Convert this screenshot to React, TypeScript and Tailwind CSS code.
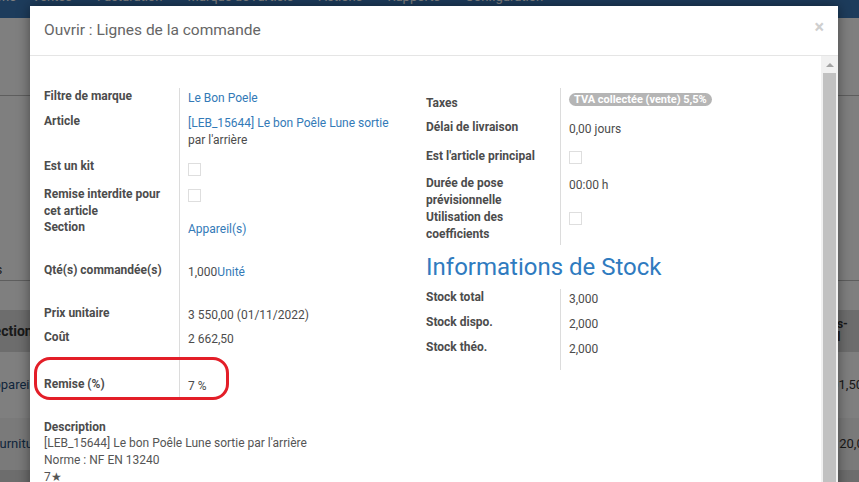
import React from 'react';

type RowProps = {
  label: React.ReactNode;
  h: string;
  labelW?: string;
  labelPt?: string;
  children?: React.ReactNode;
};

function FieldRow({ label, h, labelW = 'w-[135px]', labelPt = 'pt-0', children }: RowProps) {
  return (
    <div className={`relative flex ${h}`}>
      <div className={`${labelW} ${labelPt} shrink-0 pr-2 font-bold leading-[17px] text-[#4c4c4c]`}>{label}</div>
      <div className="flex-1 border-l border-[#dcdcdc] pl-2 pt-[2px] leading-[17px] text-[#4c4c4c]">{children}</div>
    </div>
  );
}

function Check({ mt }: { mt: string }) {
  return <div className={`${mt} h-[13px] w-[13px] border border-[#dedede] bg-white`} />;
}

function Link({ children }: { children: React.ReactNode }) {
  return <span className="text-[#337ab7]">{children}</span>;
}

export default function App() {
  return (
    <div className="relative h-[482px] w-[859px] overflow-hidden bg-white font-['Roboto',sans-serif] text-[12px]">
      {/* app page behind the dialog */}
      <nav className="flex h-[18px] gap-[25px] bg-[#3a78b8] text-[13px] text-white">
        {['Téléphone', 'Ventes', 'Facturation', "Marque de l'article", 'Actions', 'Rapports', 'Configuration'].map((m, i) => (
          <span key={m} className={`-translate-y-[12px] leading-[18px] ${i === 0 ? '-ml-[44px] -mr-[9px]' : ''}`}>
            {m}
          </span>
        ))}
      </nav>
      <div className="h-[78px] border-b border-[#bcbcbc]" />
      <div className="flex h-[185px] items-end border-b border-[#bcbcbc] pb-[1px]">
        <span className="-ml-[48px] leading-[17px] text-[#333]">Appareils</span>
      </div>
      <div className="h-[29px]" />
      <div className="-ml-[15px] w-[884px] text-[#333]">
        <div className="flex h-[42px] items-center justify-between bg-[#dadada] font-bold">
          <span className="text-[14px]">Section</span>
          <span className="mr-[13px] w-[40px] text-[12px] leading-[13px]">Sous-total</span>
        </div>
        <div className="flex h-[66px] items-center justify-between text-[13px]">
          <span className="text-[#1f4d7a]">Appareil(s)</span>
          <span className="mr-[6px]">3 301,50</span>
        </div>
        <div className="flex h-[52px] items-center justify-between bg-[#f4f4f4] text-[13px]">
          <span className="text-[#1f4d7a]">Fourniture</span>
          <span className="-mr-[2px]">120,00</span>
        </div>
        <div className="h-[40px] bg-[#dadada]" />
      </div>

      <div className="absolute inset-0 bg-black/50" />

      {/* dialog */}
      <div className="absolute left-[30px] top-[6px] flex h-[500px] w-[808px] flex-col bg-white shadow-[0_0_12px_rgba(0,0,0,0.45)]">
        <div className="flex h-[50px] shrink-0 items-center justify-between border-b border-[#e5e5e5] pl-[14px] pr-[14px]">
          <span className="pt-[1px] text-[15.5px] text-[#666]">Ouvrir : Lignes de la commande</span>
          <span className="-mt-[7px] text-[18px] font-bold leading-none text-[#cfcfcf]">×</span>
        </div>

        <div className="flex min-h-0 flex-1">
          <div className="flex-1 pl-[14px] pt-[32px]">
            <div className="flex">
              {/* left group */}
              <div className="w-[382px] shrink-0">
                <FieldRow label="Filtre de marque" h="h-[25px]">
                  <Link>Le Bon Poele</Link>
                </FieldRow>
                <FieldRow label="Article" h="h-[45px]">
                  <Link>[LEB_15644] Le bon Poêle Lune sortie</Link>
                  <br />
                  par l'arrière
                </FieldRow>
                <FieldRow label="Est un kit" h="h-[28px]">
                  <Check mt="mt-[3px]" />
                </FieldRow>
                <FieldRow label={<>Remise interdite pour<br />cet article</>} h="h-[33px]">
                  <Check mt="mt-[1px]" />
                </FieldRow>
                <FieldRow label="Section" h="h-[43px]">
                  <Link>Appareil(s)</Link>
                </FieldRow>
                <FieldRow label="Qté(s) commandée(s)" h="h-[43px]">
                  1,000<Link>Unité</Link>
                </FieldRow>
                <FieldRow label="Prix unitaire" h="h-[24px]">
                  3 550,00 (01/11/2022)
                </FieldRow>
                <FieldRow label="Coût" h="h-[47px]">
                  2 662,50
                </FieldRow>
                <FieldRow label="Remise (%)" h="h-[22px]">
                  7 %
                  <div className="pointer-events-none absolute -left-[10px] -top-[19px] h-[43px] w-[195px] rounded-[16px] border-[3px] border-[#e31e28]" />
                </FieldRow>
              </div>

              {/* right group */}
              <div className="flex-1">
                <FieldRow label="Taxes" h="h-[31px]" labelW="w-[134px]" labelPt="pt-[7px]">
                  <span className="mt-[3px] inline-block rounded-full bg-[#b5b5b5] px-[5px] text-[11px] font-bold leading-[13px] text-white">
                    TVA collectée (vente) 5,5%
                  </span>
                </FieldRow>
                <FieldRow label="Délai de livraison" h="h-[29px]" labelW="w-[134px]">
                  0,00 jours
                </FieldRow>
                <FieldRow label="Est l'article principal" h="h-[27px]" labelW="w-[134px]">
                  <Check mt="mt-[1px]" />
                </FieldRow>
                <FieldRow label={<>Durée de pose<br />prévisionnelle</>} h="h-[34px]" labelW="w-[134px]">
                  00:00 h
                </FieldRow>
                <FieldRow label={<>Utilisation des<br />coefficients</>} h="h-[36px]" labelW="w-[134px]">
                  <Check mt="mt-[1px]" />
                </FieldRow>
                <div className="h-[44px] text-[24px] leading-[44px] text-[#2f7bbf]">Informations de Stock</div>
                <FieldRow label="Stock total" h="h-[25px]" labelW="w-[134px]">
                  3,000
                </FieldRow>
                <FieldRow label="Stock dispo." h="h-[25px]" labelW="w-[134px]">
                  2,000
                </FieldRow>
                <FieldRow label="Stock théo." h="h-[31px]" labelW="w-[134px]">
                  2,000
                </FieldRow>
              </div>
            </div>

            <div className="mt-[21px] leading-[17px] text-[#555]">
              <div className="font-bold text-[#4c4c4c]">Description</div>
              <div className="-mt-[1px]">[LEB_15644] Le bon Poêle Lune sortie par l'arrière</div>
              <div>Norme : NF EN 13240</div>
              <div>7★</div>
            </div>
          </div>

          {/* scrollbar */}
          <div className="flex w-[17px] shrink-0 flex-col items-center bg-[#f1f1f1]">
            <div className="mt-[7px] h-0 w-0 border-x-[4px] border-b-[4px] border-x-transparent border-b-[#a3a3a3]" />
            <div className="mt-[6px] w-[13px] flex-1 bg-[#c1c1c1]" />
          </div>
        </div>
      </div>
    </div>
  );
}
